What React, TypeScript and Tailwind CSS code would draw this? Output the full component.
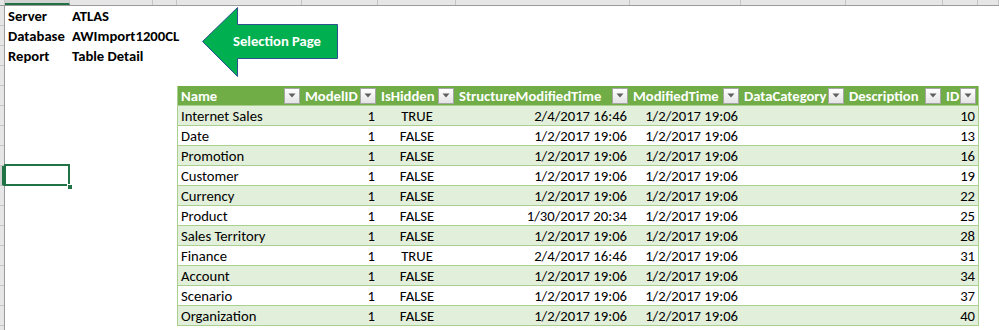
import React from 'react';

// sheet column widths (A..L), px, matching the grid in the capture
const sheetCols = [65, 83, 24, 125, 76, 78, 174, 111, 105, 97, 35, 21];

type Col = { name: string; w: number; align: 'left' | 'right' | 'center' };

const tableCols: Col[] = [
  { name: 'Name', w: 125, align: 'left' },
  { name: 'ModelID', w: 76, align: 'right' },
  { name: 'IsHidden', w: 78, align: 'center' },
  { name: 'StructureModifiedTime', w: 174, align: 'right' },
  { name: 'ModifiedTime', w: 111, align: 'right' },
  { name: 'DataCategory', w: 105, align: 'left' },
  { name: 'Description', w: 97, align: 'left' },
  { name: 'ID', w: 35, align: 'right' },
];

const d = '1/2/2017 19:06';
const rows: string[][] = [
  ['Internet Sales', '1', 'TRUE', '2/4/2017 16:46', d, '', '', '10'],
  ['Date', '1', 'FALSE', d, d, '', '', '13'],
  ['Promotion', '1', 'FALSE', d, d, '', '', '16'],
  ['Customer', '1', 'FALSE', d, d, '', '', '19'],
  ['Currency', '1', 'FALSE', d, d, '', '', '22'],
  ['Product', '1', 'FALSE', '1/30/2017 20:34', d, '', '', '25'],
  ['Sales Territory', '1', 'FALSE', d, d, '', '', '28'],
  ['Finance', '1', 'TRUE', '2/4/2017 16:46', d, '', '', '31'],
  ['Account', '1', 'FALSE', d, d, '', '', '34'],
  ['Scenario', '1', 'FALSE', d, d, '', '', '37'],
  ['Organization', '1', 'FALSE', d, d, '', '', '40'],
];

const info = [
  ['Server', 'ATLAS'],
  ['Database', 'AWImport1200CL'],
  ['Report', 'Table Detail'],
];

const alignClass = {
  left: 'justify-start',
  right: 'justify-end',
  center: 'justify-center',
};

function FilterButton() {
  return (
    <div className="ml-auto mr-[2px] flex h-[16px] w-[16px] shrink-0 items-center justify-center border border-[#a6a6a6] bg-gradient-to-b from-white to-[#e4e4e4]">
      <svg width="8" height="5" viewBox="0 0 8 5">
        <path d="M0.5 0.5 L7.5 0.5 L4 4.5 Z" fill="#5f5f5f" />
      </svg>
    </div>
  );
}

function Arrow() {
  return (
    <div className="absolute left-[200px] top-[5px] h-[75px] w-[140px]">
      <svg width="140" height="75" viewBox="0 0 140 75">
        <path
          d="M2.5 36.5 L37.5 2.5 L37.5 19.5 L137.5 19.5 L137.5 53.5 L37.5 53.5 L37.5 71.5 Z"
          fill="#00b050"
          stroke="#2f528f"
          strokeWidth="1"
        />
      </svg>
      <span className="absolute left-[33px] top-[26px] text-[14.67px] font-bold leading-[20px] text-white">
        Selection Page
      </span>
    </div>
  );
}

export default function App() {
  return (
    <div className="relative h-[330px] w-[999px] overflow-hidden bg-white font-[family-name:Carlito,Calibri,Lato,sans-serif] text-[14.67px] text-black">
      {/* column headers (only the bottom edge is in view) */}
      <div className="flex h-[6px] border-b border-[#9b9b9b] bg-[#e6e6e6]">
        <div className="w-[5px] shrink-0 border-r border-[#c6c6c6]" />
        {sheetCols.map((w, i) => (
          <div
            key={i}
            style={{ width: w }}
            className={
              i === 0
                ? 'shrink-0 border-b-2 border-r border-b-[#217346] border-r-[#c6c6c6] bg-[#d2d2d2]'
                : 'shrink-0 border-r border-[#c6c6c6]'
            }
          />
        ))}
      </div>

      <div className="flex">
        {/* row headers */}
        <div className="flex w-[5px] shrink-0 flex-col border-r border-[#9b9b9b] bg-[#e6e6e6]">
          {Array.from({ length: 17 }).map((_, i) => (
            <div
              key={i}
              className={
                i === 8
                  ? 'h-[20px] border-b border-r-2 border-b-[#c6c6c6] border-r-[#217346] bg-[#d2d2d2]'
                  : 'h-[20px] border-b border-[#c6c6c6]'
              }
            />
          ))}
        </div>

        {/* sheet body */}
        <div className="flex flex-1 flex-col">
          {info.map(([label, value]) => (
            <div key={label} className="flex h-[20px] items-center font-bold leading-[20px]">
              <div className="w-[65px] shrink-0 pl-[3px]">{label}</div>
              <div className="w-[83px] shrink-0 whitespace-nowrap pl-[2px]">{value}</div>
            </div>
          ))}
          <div className="h-[20px]" />

          <div className="flex">
            {/* columns A..C, with the active cell A9 */}
            <div className="flex w-[172px] shrink-0 flex-col">
              <div className="h-[80px]" />
              <div className="relative h-[20px] w-[65px]">
                <div className="absolute -left-[1px] -top-[2px] h-[22px] w-[66px] border-2 border-[#217346]" />
                <div className="absolute -right-[3px] bottom-[-4px] h-[6px] w-[6px] border border-white bg-[#217346]" />
              </div>
            </div>

            {/* table */}
            <div className="flex flex-col border-x border-[#a9d08e]">
              <div className="flex h-[20px] border-b border-[#a9d08e] bg-[#70ad47] font-bold text-white">
                {tableCols.map((c, i) => (
                  <div
                    key={c.name}
                    style={{ width: i === 0 ? c.w - 1 : c.w }}
                    className="flex shrink-0 items-center whitespace-nowrap pl-[3px]"
                  >
                    <span>{c.name}</span>
                    <FilterButton />
                  </div>
                ))}
              </div>
              {rows.map((r, ri) => (
                <div
                  key={ri}
                  className={
                    ri % 2 === 0
                      ? 'flex h-[20px] border-b border-[#a9d08e] bg-[#e2efda] leading-[20px]'
                      : 'flex h-[20px] border-b border-[#a9d08e] bg-white leading-[20px]'
                  }
                >
                  {tableCols.map((c, ci) => (
                    <div
                      key={c.name}
                      style={{ width: ci === 0 ? c.w - 1 : c.w }}
                      className={`flex shrink-0 whitespace-nowrap px-[3px] ${alignClass[c.align]}`}
                    >
                      {r[ci]}
                    </div>
                  ))}
                </div>
              ))}
            </div>
          </div>
        </div>
      </div>

      <Arrow />
    </div>
  );
}
